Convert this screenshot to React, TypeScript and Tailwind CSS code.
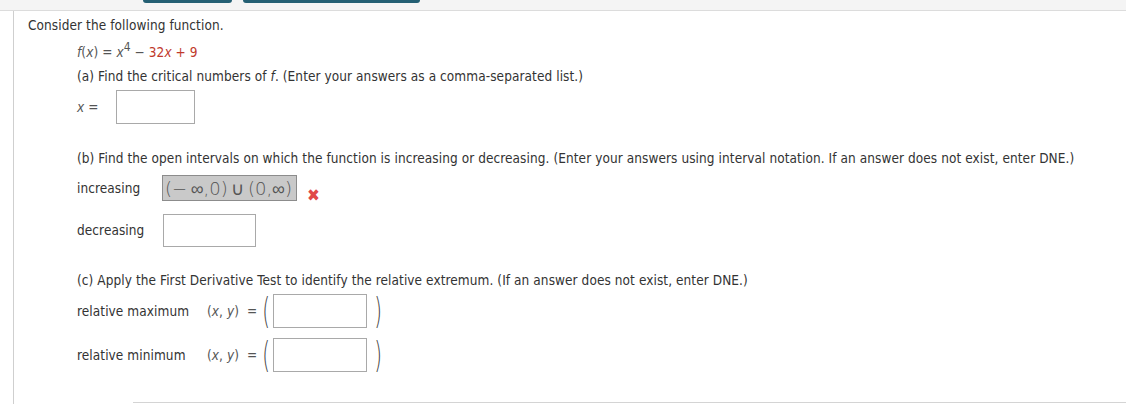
import React from "react";

function Box({ w, h }: { w: number; h: number }) {
  return (
    <div
      className="border border-[#a9a9a9] bg-white"
      style={{ width: w, height: h }}
    />
  );
}

function Paren({ children }: { children: React.ReactNode }) {
  return (
    <span className="inline-block h-[34px] scale-x-[0.55] font-['DejaVu_Sans',sans-serif] text-[36px] leading-[34px] font-extralight text-[#444]">
      {children}
    </span>
  );
}

function PointRow({ label }: { label: string }) {
  return (
    <div className="flex h-[34px] items-center">
      <span className="w-[130px]">{label}</span>
      <span className="text-[#555]">
        (<i>x</i>, <i>y</i>)&nbsp; =
      </span>
      <span className="ml-[2px] flex h-[34px] items-center">
        <Paren>(</Paren>
        <Box w={94} h={34} />
        <span className="ml-[4px]">
          <Paren>)</Paren>
        </span>
      </span>
    </div>
  );
}

export default function App() {
  return (
    <div className="relative h-[404px] w-full overflow-hidden bg-white font-['DejaVu_Sans_Condensed','DejaVu_Sans',Verdana,sans-serif] text-[13.5px] tracking-[0.08px] text-[#333]">
      {/* top strip with the cut off buttons */}
      <div className="flex h-[11px] gap-[11px] border-b border-[#dcdcdc] bg-[#f4f4f4] pl-[143px]">
        <div className="h-[3px] w-[89px] rounded-b-[3px] bg-[#245f73]" />
        <div className="h-[3px] w-[177px] rounded-b-[3px] bg-[#245f73]" />
      </div>

      <div className="ml-[13px] h-[393px] border-l border-[#cfcfcf] pl-[14px]">
        <div className="pt-[4px] leading-[20px]">Consider the following function.</div>

        <div className="pl-[49px]">
          <div className="mt-[7px] leading-[20px] text-[#555]">
            <i>f</i>(<i>x</i>) = <i>x</i>
            <sup className="text-[12px]">4</sup> − <span className="text-[#c0392b]">32<i>x</i> + 9</span>
          </div>

          <div className="mt-[4px] leading-[20px]">
            (a) Find the critical numbers of <i>f</i>. (Enter your answers as a comma-separated list.)
          </div>

          <div className="mt-[4px] flex items-center">
            <span className="w-[39px] text-[#555]">
              <i>x</i> =
            </span>
            <Box w={79} h={34} />
          </div>

          <div className="mt-[24px] whitespace-nowrap leading-[20px]">
            (b) Find the open intervals on which the function is increasing or decreasing. (Enter your answers using interval notation. If an answer does not exist, enter DNE.)
          </div>

          <div className="mt-[7px] flex items-center">
            <span className="w-[85px]">increasing</span>
            <div className="flex h-[26px] w-[135px] items-center border border-[#8c8c8c] bg-[#c9c9c9] pl-[2px] font-['DejaVu_Sans',sans-serif] text-[18px] font-extralight tracking-normal text-[#555]">
              (−&thinsp;∞,0)&thinsp;∪&thinsp;(0,∞)
            </div>
            <span className="ml-[10px] translate-y-[7px] text-[17px] leading-none text-[#e0484a]">✖</span>
          </div>

          <div className="mt-[13px] flex items-center">
            <span className="w-[86px]">decreasing</span>
            <Box w={93} h={33} />
          </div>

          <div className="mt-[23px] leading-[20px]">
            (c) Apply the First Derivative Test to identify the relative extremum. (If an answer does not exist, enter DNE.)
          </div>

          <div className="mt-[4px]">
            <PointRow label="relative maximum" />
          </div>
          <div className="mt-[10px]">
            <PointRow label="relative minimum" />
          </div>
        </div>
      </div>

      <div className="absolute bottom-[1px] left-[133px] right-0 border-t border-[#d4d4d4]" />
    </div>
  );
}
